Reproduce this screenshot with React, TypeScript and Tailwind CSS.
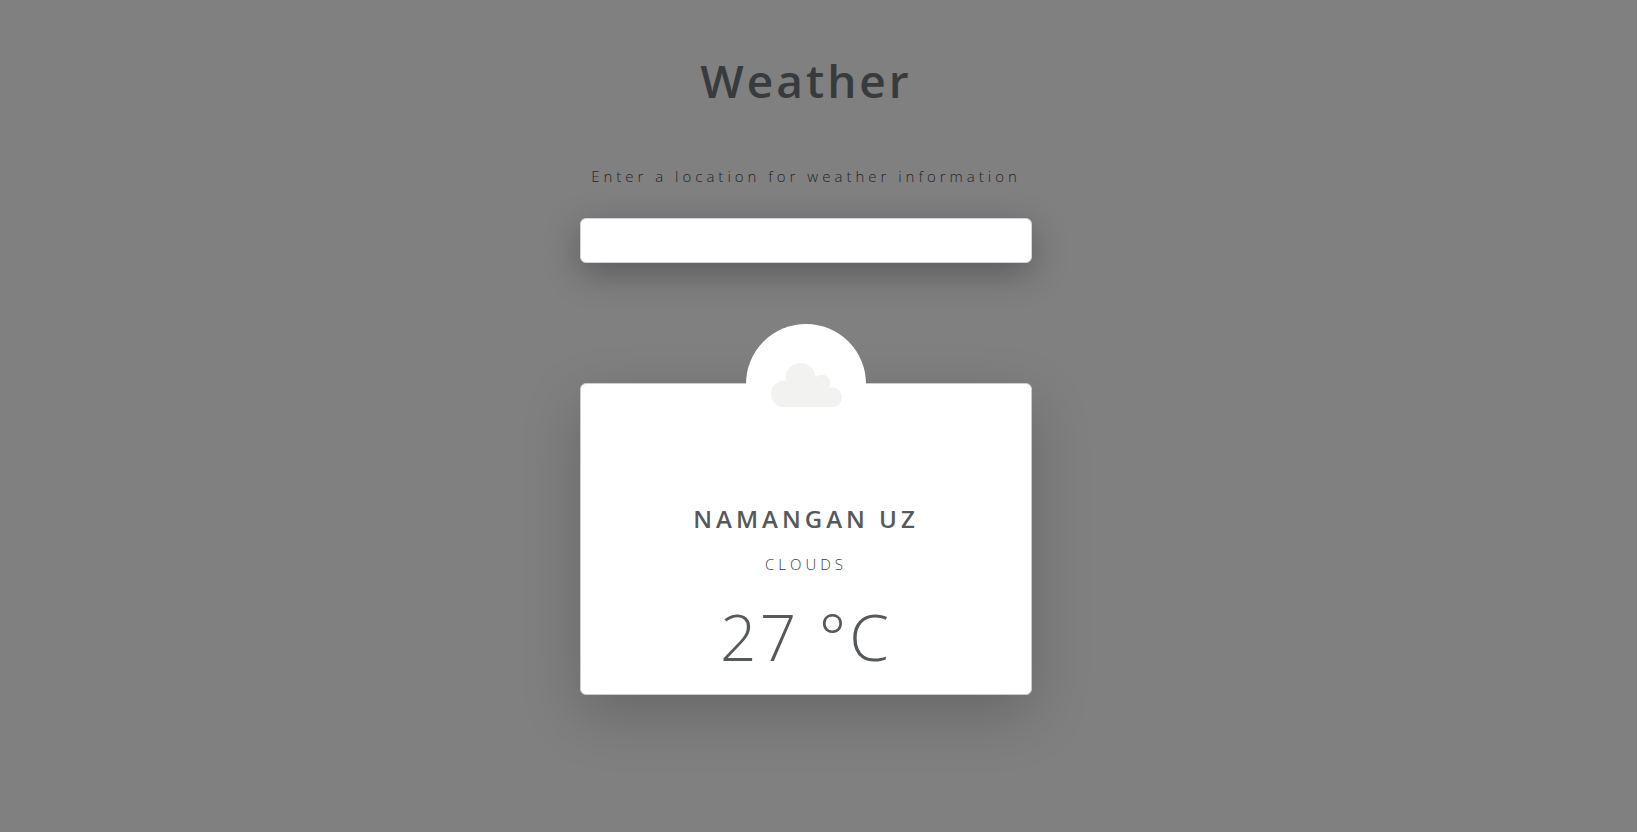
import { useState } from "react";

function CloudIcon() {
  return (
    <svg viewBox="0 0 213 133" className="mt-0.5 w-[71px]" fill="#f2f2f0" aria-hidden="true">
      <circle cx="40" cy="93" r="40" />
      <circle cx="89" cy="45" r="45" />
      <circle cx="153" cy="60" r="25" />
      <circle cx="183" cy="103" r="30" />
      <path d="M40 133V70L60 45H130L160 62L183 90V133Z" />
    </svg>
  );
}

export default function App() {
  const [location, setLocation] = useState("");

  return (
    <main className="min-h-screen bg-[#808080] pr-[25px] pt-[50px] font-['Open_Sans',sans-serif] text-[#373b3e]">
      <div className="mx-auto flex w-full max-w-[452px] flex-col items-center">
        <h1 className="text-[46px] leading-[60px] font-semibold tracking-[3px]">Weather</h1>
        <label
          htmlFor="location"
          className="mt-[54px] text-[15px] leading-6 font-light tracking-[4px] whitespace-nowrap text-[#222628]"
        >
          Enter a location for weather information
        </label>
        <input
          id="location"
          type="text"
          value={location}
          onChange={(event) => setLocation(event.target.value)}
          className="mt-[30px] h-[45px] w-full rounded-md border border-[#ced4da] bg-white px-3 text-base shadow-[0_10px_35px_rgba(0,0,0,0.3)] outline-none"
        />

        <section className="mt-[120px] flex w-full flex-col items-center rounded-md border border-[#cccccc] bg-white pb-3 text-[#55595c] shadow-[0_20px_60px_rgba(0,0,0,0.2)]">
          <div className="-mt-[60px] flex size-[120px] items-center justify-center rounded-full bg-white">
            <CloudIcon />
          </div>
          <h2 className="mt-[59px] text-2xl leading-8 font-semibold tracking-[4px] uppercase">
            Namangan UZ
          </h2>
          <p className="mt-[17px] text-[15px] leading-6 font-light tracking-[4px] uppercase text-[#373b3e]">
            Clouds
          </p>
          <p className="mt-4 text-[64px] leading-[90px] font-light tracking-[3px]">27 °C</p>
        </section>
      </div>
    </main>
  );
}
